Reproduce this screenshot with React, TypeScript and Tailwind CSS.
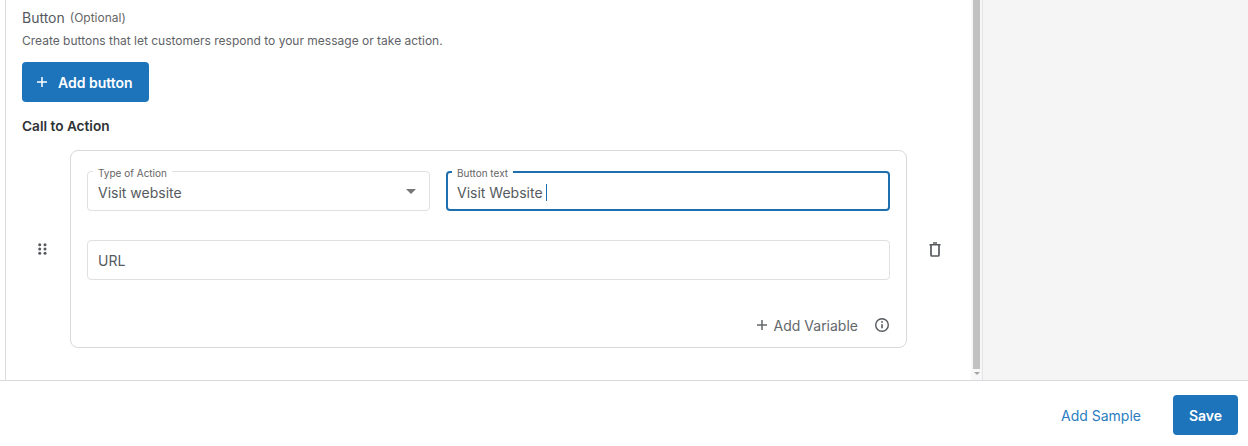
import React from "react";

const font = { fontFamily: "Inter, sans-serif" };

function Plus({ className }: { className: string }) {
  return (
    <svg viewBox="0 0 12 12" className={className} fill="none" stroke="currentColor" strokeWidth="1.5">
      <path d="M6 1v10M1 6h10" />
    </svg>
  );
}

export default function App() {
  return (
    <div className="flex h-[446px] w-[1248px] flex-col overflow-hidden bg-white font-['Inter',sans-serif] text-[#555a60]" style={font}>
      <div className="flex h-[381px] shrink-0 border-b border-[#d8dadd]">
        <div className="ml-[5px] w-[966px] shrink-0 border-l border-[#dcdcdc] pl-4">
          <div className="mt-[10px] flex h-4 items-center text-[14px] leading-4">
            <span className="text-[#55595e]">Button</span>
            <span className="ml-[5px] text-[12px] text-[#666]">(Optional)</span>
          </div>
          <p className="mt-[7px] h-4 text-[12px] leading-4 text-[#5f6368]">
            Create buttons that let customers respond to your message or take action.
          </p>
          <button className="mt-[13px] flex h-10 w-[127px] items-center rounded-[4px] bg-[#1d74bb] pl-[14px] text-[14px] font-semibold text-white">
            <Plus className="h-[12px] w-[12px]" />
            <span className="ml-[10px]">Add button</span>
          </button>
          <h3 className="mt-[15px] h-[18px] text-[13.65px] font-semibold leading-[18px] text-[#2f3235]">Call to Action</h3>

          <div className="mt-[15px] flex items-center">
            <div className="flex w-[48px] shrink-0 justify-start pl-[16px]">
              <svg width="10" height="12" viewBox="0 0 10 12" fill="#55595e">
                <circle cx="1.7" cy="1.7" r="1.5" />
                <circle cx="7" cy="1.7" r="1.5" />
                <circle cx="1.7" cy="6" r="1.5" />
                <circle cx="7" cy="6" r="1.5" />
                <circle cx="1.7" cy="10.3" r="1.5" />
                <circle cx="7" cy="10.3" r="1.5" />
              </svg>
            </div>
            <div className="h-[198px] w-[837px] shrink-0 rounded-[8px] border border-[#d9d9d9] px-4 pt-[20px]">
              <div className="flex gap-4">
                <div className="relative flex h-[40px] w-[343px] items-center justify-between rounded-[4px] border border-[#e0e0e0] px-[10px] text-[14px]">
                  <span className="absolute -top-[5px] left-[5px] bg-white px-[5px] text-[10px] leading-3 text-[#666]">
                    Type of Action
                  </span>
                  <span className="pt-[2px]">Visit website</span>
                  <span className="mr-[3px] h-0 w-0 border-x-[5px] border-t-[5px] border-x-transparent border-t-[#777]" />
                </div>
                <div className="relative flex h-[40px] w-[444px] items-center rounded-[4px] border-2 border-[#1d6fb0] px-[9px] text-[14px]">
                  <span className="absolute -top-[6px] left-[4px] bg-white px-[5px] text-[10px] leading-3 text-[#666]">
                    Button text
                  </span>
                  <span className="pt-[2px]">Visit Website</span>
                  <span className="ml-[3px] mt-[2px] h-[17px] w-px bg-[#1d6fb0]" />
                </div>
              </div>
              <div className="mt-[29px] flex h-[40px] w-[803px] items-center rounded-[4px] border border-[#e0e0e0] pl-[10px] text-[14px]">
                URL
              </div>
              <div className="mt-[37px] flex h-4 items-center justify-end text-[14px] text-[#63676b]">
                <Plus className="h-[12px] w-[12px]" />
                <span className="ml-[6px]">Add Variable</span>
                <svg className="ml-[16px]" width="16" height="16" viewBox="0 0 16 16" fill="none" stroke="#55595e" strokeWidth="1.4">
                  <circle cx="8" cy="8" r="6.3" />
                  <path d="M8 7.2v4" strokeWidth="1.6" />
                  <circle cx="8" cy="5" r="0.9" fill="#55595e" stroke="none" />
                </svg>
              </div>
            </div>
            <svg className="ml-[22px]" width="12" height="15" viewBox="0 0 12 15" fill="none" stroke="#55595e">
              <path d="M0.5 2.75h11M4 1h4" strokeWidth="1.5" />
              <path d="M2 3v10a1 1 0 0 0 1 1h6a1 1 0 0 0 1-1V3" strokeWidth="1.7" />
            </svg>
          </div>
        </div>

        <div className="flex w-[11px] shrink-0 flex-col items-start bg-[#f7f7f7] pl-[2px]">
          <div className="h-[369px] w-[7px] bg-[#c1c1c1]" />
          <div className="mt-[3px] ml-[1px] h-0 w-0 border-x-[3px] border-t-[3px] border-x-transparent border-t-[#a3a3a3]" />
        </div>
        <div className="flex-1 border-l border-[#e3e5e8] bg-[#f5f5f5]" />
      </div>

      <div className="flex flex-1 items-start justify-end pr-[10px] pt-[14px]">
        <button className="mr-[32px] h-10 text-[14px] text-[#2a7dbf]">Add Sample</button>
        <button className="h-10 w-[65px] rounded-[4px] bg-[#1d74bb] text-[14px] font-semibold text-white">Save</button>
      </div>
    </div>
  );
}
